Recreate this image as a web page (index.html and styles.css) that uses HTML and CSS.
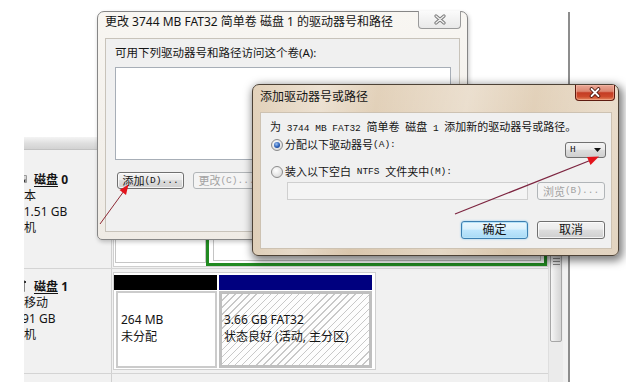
FILE: index.html
```html
<!DOCTYPE html>
<html lang="zh-CN">
<head>
<meta charset="utf-8">
<title>添加驱动器号或路径</title>
<link rel="stylesheet" href="styles.css">
</head>
<body>
<div class="screen">
  <div class="app">
    <div class="top"></div>
    <div class="band"></div>
    <div class="body">
      <div class="disks">
        <div class="disk d0">
          <div class="label">
            <div class="name"><svg class="dicon" width="16" height="14" viewBox="0 0 16 14"><rect x="1" y="3" width="14" height="8" rx="1" fill="#9a9a9a"/><rect x="2" y="4" width="12" height="3" fill="#d4d4d4"/><rect x="11" y="8" width="2" height="2" fill="#3a3a3a"/></svg><span class="u">磁盘</span> 0</div>
            <div>基本</div>
            <div class="num">931.51 GB</div>
            <div>联机</div>
          </div>
          <div class="area">
            <div class="parts0">
              <div class="q1"></div>
              <div class="q2"><div class="q2in"></div></div>
            </div>
          </div>
        </div>
        <div class="disk d1">
          <div class="label">
            <div class="name"><svg class="dicon" width="16" height="14" viewBox="0 0 16 14"><rect x="3" y="1" width="10" height="12" rx="1" fill="#8a8a8a"/><rect x="4" y="2" width="8" height="4" fill="#d0d0d0"/><rect x="12" y="2" width="2" height="2" fill="#333"/></svg><span class="u">磁盘</span> 1</div>
            <div>可移动</div>
            <div>3.91 GB</div>
            <div>联机</div>
          </div>
          <div class="area">
            <div class="parts">
              <div class="part p1">
                <div class="ph black"></div>
                <div class="pb">264 MB<br>未分配</div>
              </div>
              <div class="part p2">
                <div class="ph navy"></div>
                <div class="pb hatch">3.66 GB FAT32<br>状态良好 (活动, 主分区)</div>
              </div>
            </div>
          </div>
        </div>
        <div class="disk d2">
          <div class="label"></div>
          <div class="area"></div>
        </div>
      </div>
      <div class="vscroll"><div class="thumb"><span class="grip"></span></div></div>
    </div>
  </div>

  <div class="dlg dlg1">
    <div class="tbar">更改 3744 MB FAT32 简单卷 磁盘 1 的驱动器号和路径</div>
    <div class="close inactive"><svg width="14" height="11" viewBox="0 0 14 11"><path d="M3 2 L11 9 M11 2 L3 9" stroke="#7b7b7b" stroke-width="3.2" stroke-linecap="round" fill="none"/><path d="M3 2 L11 9 M11 2 L3 9" stroke="#f2f2f2" stroke-width="1.2" stroke-linecap="round" fill="none"/></svg></div>
    <div class="client c1">
      <div class="lbl">可用下列驱动器号和路径访问这个卷(A):</div>
      <div class="listbox"></div>
      <div class="btnrow">
        <div class="btn w67">添加<span class="m">(D)...</span></div>
        <div class="btn w67 disabled">更改<span class="m">(C)...</span></div>
      </div>
    </div>
  </div>

  <div class="dlg dlg2">
    <div class="tbar">添加驱动器号或路径</div>
    <div class="close active"><svg width="14" height="11" viewBox="0 0 14 11"><path d="M3.5 2 L10.5 9 M10.5 2 L3.5 9" stroke="#4a150c" stroke-width="3.6" stroke-linecap="round" fill="none"/><path d="M3.5 2 L10.5 9 M10.5 2 L3.5 9" stroke="#ffffff" stroke-width="1.8" stroke-linecap="round" fill="none"/></svg></div>
    <div class="client c2">
      <div class="desc">为<span class="m"> 3744 MB FAT32 </span>简单卷<span class="m"> </span>磁盘<span class="m"> 1 </span>添加新的驱动器号或路径。</div>
      <div class="rowb">
        <div class="opt"><span class="radio on"></span>分配以下驱动器号<span class="m">(A):</span></div>
        <div class="combo"><span class="m">H</span><svg width="7" height="4" viewBox="0 0 7 4"><path d="M0 0 H7 L3.5 4 Z" fill="#111"/></svg></div>
      </div>
      <div class="opt o2"><span class="radio"></span>装入以下空白<span class="m"> NTFS </span>文件夹中<span class="m">(M):</span></div>
      <div class="rowd">
        <div class="field"></div>
        <div class="btn w68 disabled">浏览<span class="m">(B)...</span></div>
      </div>
      <div class="rowe">
        <div class="btn w67 def">确定</div>
        <div class="btn w68">取消</div>
      </div>
    </div>
  </div>

  <svg class="arrows" width="626" height="382" viewBox="0 0 626 382">
    <line x1="100" y1="224" x2="124" y2="191" stroke="#8e2a35" stroke-width="1"/>
    <polygon points="128.5,184.5 126,195 119.5,190" fill="#e3141c"/>
    <line x1="455" y1="214" x2="590" y2="160.5" stroke="#7d2540" stroke-width="1.2"/>
    <polygon points="599,156.5 590.5,165 587,157" fill="#e3141c"/>
  </svg>
</div>
</body>
</html>
```

FILE: styles.css
```css
* { box-sizing: border-box; }
html, body { margin: 0; padding: 0; }
body {
  width: 626px;
  height: 382px;
  overflow: hidden;
  background: #fff;
  font-family: "Noto Sans", "Noto Sans CJK SC", sans-serif;
  font-size: 12px;
  color: #141414;
}
.screen { position: relative; width: 626px; height: 382px; overflow: hidden; }
.m { font-family: "Liberation Mono", "Noto Sans CJK SC", monospace; font-size: 9.5px; }

/* background disk management window */
.app {
  position: absolute;
  left: 24px;
  top: 12px;
  width: 546px;
  height: 370px;
  border-right: 2px solid #8d8d8d;
  overflow: hidden;
  display: flex;
  flex-direction: column;
  background: #fff;
}
.top { height: 125px; flex: none; }
.band {
  height: 13px;
  flex: none;
  background: linear-gradient(#f4f4f4, #dedede 55%, #d2d2d2);
  border-bottom: 1px solid #c2c2c2;
}
.body { flex: 1; display: flex; min-height: 0; background: #f1f1f1; }
.disks { flex: 1; margin-left: -12px; display: flex; flex-direction: column; min-width: 0; }
.disk { display: flex; flex: none; border-bottom: 1px solid #d4d4d4; }
.d0 { height: 119px; }
.d1 { height: 105px; }
.d2 { flex: 1; border-bottom: none; }
.label {
  width: 100px;
  flex: none;
  border-right: 1px solid #d0d0d0;
  line-height: 16px;
  font-size: 12px;
  white-space: nowrap;
}
.d0 .label { padding-top: 22px; }
.d1 .label { padding-top: 10px; }
.num { margin-left: -2px; }
.name { font-weight: bold; }
.name .u { text-decoration: underline; text-underline-offset: 2px; }
.dicon { display: inline-block; vertical-align: -2px; margin-right: 6px; }
.area { flex: 1; min-width: 0; }

.parts0 {
  margin: 4px 0 0 1px;
  height: 113px;
  border: 1px solid #cfcfcf;
  display: flex;
  background: #fff;
}
.q1 { width: 91px; margin: 0 0 3px 1px; border: 1px solid #c6c6c6; border-top: none; background: #fff; }
.q2 { flex: 1; border: 3px solid #218a21; padding: 2px 3px 2px 4px; background: #fff; }
.q2in { height: 100%; border: 1px solid #c4c4c4; border-top: none; background: #fff; }

.parts {
  margin: 3px 0 0 1px;
  width: 263px;
  height: 98px;
  border: 1px solid #cfcfcf;
  background: #fff;
  padding: 2px 3px 1px 0;
  display: flex;
  gap: 2px;
}
.part { display: flex; flex-direction: column; }
.p1 { width: 103px; }
.p2 { width: 153px; }
.ph { height: 15px; flex: none; }
.black { background: #000; }
.navy { background: #00007f; }
.pb {
  flex: 1;
  margin-top: 1px;
  line-height: 17px;
  font-size: 12px;
  white-space: nowrap;
}
.p1 .pb { margin-left: 2px; border: 2px solid #cbcbcb; background: #fff; padding: 18px 0 0 3px; }
.p2 .pb { border: 3px solid #bfbfbf; padding: 17px 0 0 2px; }
.hatch { background: repeating-linear-gradient(135deg, #fdfdfd 0 4px, #c8c8c8 4px 5px); }

.vscroll {
  width: 15px;
  flex: none;
  margin-right: 5px;
  background: #ebebeb;
  border-left: 1px solid #dedede;
  padding-top: 30px;
}
.thumb {
  height: 162px;
  margin: 0 1px;
  border: 1px solid #a6a6a6;
  border-radius: 2px;
  background: linear-gradient(to right, #f6f6f6, #e4e4e4 50%, #d4d4d4);
  display: flex;
  align-items: center;
  justify-content: center;
}
.grip { width: 7px; height: 7px; background: repeating-linear-gradient(#808080 0 1px, transparent 1px 3px); }

/* dialogs */
.dlg { position: absolute; display: flex; flex-direction: column; }
.tbar { flex: none; white-space: nowrap; font-size: 12px; }
.client { flex: 1; background: #f0f0f0; }
.close {
  position: absolute;
  display: flex;
  align-items: center;
  justify-content: center;
  border-radius: 0 0 4px 4px;
}

.dlg1 {
  left: 97px;
  top: 11px;
  width: 371px;
  height: 229px;
  padding: 0 7px 7px;
  border: 1px solid #868686;
  border-radius: 7px 7px 5px 5px;
  background: linear-gradient(#f8f6f2, #efebe5);
  box-shadow: 1px 2px 4px rgba(0, 0, 0, 0.22);
}
.dlg1 .tbar { height: 26px; line-height: 20px; }
.close.inactive {
  right: 6px;
  top: -1px;
  width: 43px;
  height: 18px;
  border: 1px solid #9a9a9a;
  border-top: none;
  background: linear-gradient(#fbfbfb, #e9e9e9);
}
.c1 { border: 1px solid #c8c3ba; padding: 6px 0 0 9px; overflow: hidden; }
.lbl { line-height: 16px; font-size: 11.5px; white-space: nowrap; }
.listbox { margin-top: 6px; width: 336px; height: 93px; border: 1px solid #a7aeb7; background: #fff; }
.btnrow { margin-top: 12px; padding-left: 2px; display: flex; gap: 9px; }

.btn {
  display: flex;
  align-items: center;
  justify-content: center;
  height: 17px;
  border: 1px solid #707070;
  border-radius: 3px;
  background: linear-gradient(#f3f3f3 0%, #ebebeb 45%, #dddddd 50%, #cfcfcf 100%);
  box-shadow: inset 0 0 0 1px rgba(255, 255, 255, 0.75);
  font-size: 11px;
  line-height: 1;
  white-space: nowrap;
  flex: none;
}
.w67 { width: 67px; }
.w68 { width: 68px; }
.btn.disabled { color: #a2a2a2; border-color: #b1b5b8; background: #f4f4f4; box-shadow: none; }
.btn.def {
  border-color: #3c7fb1;
  background: linear-gradient(#ecf7fd 0%, #dbf1fc 45%, #bfe6fd 50%, #a9daf5 100%);
  box-shadow: inset 0 0 0 1px #b6e3f9, 0 0 2px #7fc6ee;
}

.dlg2 {
  left: 252px;
  top: 84px;
  width: 367px;
  height: 172px;
  padding: 0 6px 6px 7px;
  border: 1px solid #4d4236;
  border-radius: 7px 7px 6px 6px;
  background:
    linear-gradient(100deg, rgba(255,255,255,0) 0%, rgba(255,255,255,0.35) 18%, rgba(255,255,255,0) 32%, rgba(255,255,255,0.3) 55%, rgba(255,255,255,0) 72%, rgba(255,255,255,0.25) 90%),
    linear-gradient(#e3d2bb, #d9c6ac);
  box-shadow: 2px 3px 9px 2px rgba(0, 0, 0, 0.5);
}
.dlg2 .tbar { height: 27px; line-height: 24px; }
.close.active {
  right: 3px;
  top: 0;
  width: 40px;
  height: 16px;
  border: 1px solid #5e1b10;
  border-top: none;
  background: linear-gradient(#eaa897 0%, #dc8670 42%, #c43c24 52%, #cd4a2c 78%, #e48a60 100%);
  box-shadow: inset 0 0 0 1px rgba(255, 200, 180, 0.45);
}
.c2 {
  border: 1px solid #cdc2b2;
  font-size: 11px;
  display: flex;
  flex-direction: column;
}
.desc { margin-top: 7px; padding-left: 9px; line-height: 14px; white-space: nowrap; }
.rowb { height: 22px; display: flex; justify-content: space-between; align-items: flex-start; padding-right: 5px; }
.opt { display: flex; align-items: center; line-height: 14px; padding-left: 10px; white-space: pre; }
.rowb .opt { margin-top: 2px; }
.o2 { margin-top: 7px; }
.radio {
  width: 12px;
  height: 12px;
  flex: none;
  margin-right: 2px;
  border: 1px solid #8b8b8b;
  border-radius: 50%;
  background: radial-gradient(circle at 40% 35%, #ffffff, #e6e6e6 55%, #cfcfcf);
  display: flex;
  align-items: center;
  justify-content: center;
}
.radio.on::after {
  content: "";
  width: 6px;
  height: 6px;
  border-radius: 50%;
  background: radial-gradient(circle at 40% 35%, #9fc3f0, #2a5fb8 55%, #0d2e74);
}
.combo {
  margin-top: 6px;
  width: 41px;
  height: 16px;
  border: 1px solid #707070;
  border-radius: 3px;
  background: linear-gradient(#f3f3f3 0%, #ebebeb 45%, #dddddd 50%, #cfcfcf 100%);
  display: flex;
  align-items: center;
  justify-content: space-between;
  padding: 0 4px;
  line-height: 1;
}
.rowd { margin-top: 3px; padding-left: 26px; display: flex; gap: 9px; }
.field { width: 241px; height: 18px; border: 1px solid #cfcfcf; background: #f4f4f4; }
.rowd .btn { height: 18px; }
.rowe { margin-top: 21px; padding-right: 6px; display: flex; justify-content: flex-end; gap: 9px; }
.rowe .btn { height: 18px; font-size: 12px; }

.arrows { position: absolute; left: 0; top: 0; pointer-events: none; }
```
